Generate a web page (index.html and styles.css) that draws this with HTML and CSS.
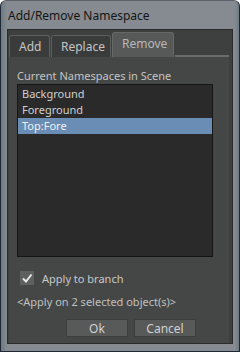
FILE: index.html
```html
<!DOCTYPE html>
<html lang="en">

<head>
    <meta charset="UTF-8">
    <title>Add/Remove Namespace</title>
    <link rel="stylesheet" href="styles.css">
</head>

<body>
    <div class="window">
        <div class="titlebar">Add/Remove Namespace</div>
        <div class="client">
            <div class="tabs">
                <div class="tab">Add</div>
                <div class="tab">Replace</div>
                <div class="tab active">Remove</div>
                <div class="tab-rest"></div>
            </div>
            <div class="panel">
                <div class="label">Current Namespaces in Scene</div>
                <div class="list">
                    <div class="item">Background</div>
                    <div class="item">Foreground</div>
                    <div class="item selected">Top:Fore</div>
                </div>
                <div class="check-row">
                    <span class="checkbox">
                        <svg width="14" height="14" viewBox="0 0 14 14">
                            <path d="M3 7.5 L6 10.5 L11.5 3.5" fill="none" stroke="#e8e8e8" stroke-width="2" />
                        </svg>
                    </span>
                    <span>Apply to branch</span>
                </div>
                <div class="info">&lt;Apply on 2 selected object(s)&gt;</div>
                <div class="buttons">
                    <button class="btn">Ok</button>
                    <button class="btn">Cancel</button>
                </div>
            </div>
        </div>
    </div>
</body>

</html>
```

FILE: styles.css
```css
body {
    margin: 0;
    background-color: #ffffff;
    font-family: "Noto Sans", "Open Sans", sans-serif;
    font-size: 11px;
}

.window {
    width: 240px;
    height: 352px;
    box-sizing: border-box;
    display: flex;
    flex-direction: column;
    background: linear-gradient(to right, #6f7a84, #858b90 6px, #858b90 234px, #6f7a84);
    border: 1px solid #1e2833;
    border-top-color: #5c6268;
    border-radius: 6px 6px 0 0;
    padding: 0 6px 7px 6px;
}

.titlebar {
    height: 28px;
    line-height: 30px;
    padding-left: 1px;
    font-size: 12px;
    color: #151515;
}

.client {
    flex: 1;
    display: flex;
    flex-direction: column;
    background-color: #3e403f;
    border: 1px solid #2a2c2c;
    padding: 2px 3px 0 1px;
}

.tabs {
    display: flex;
    align-items: flex-end;
    height: 25px;
}

.tab {
    height: 21px;
    line-height: 21px;
    padding: 0 9px;
    margin-right: 1px;
    background-color: #3a3c3c;
    border: 1px solid #5c5e5e;
    border-bottom: none;
    border-radius: 3px 3px 0 0;
    color: #c4c4c4;
    font-size: 12px;
}

.tab:first-child {
    width: 21px;
}

.tab:nth-child(2) {
    width: 40px;
}

.tab.active {
    height: 24px;
    line-height: 22px;
    width: 42px;
    background-color: #575959;
    border-color: #666868;
    color: #b8b8b8;
}

.tab-rest {
    flex: 1;
    height: 2px;
    background-color: #6a6c6c;
}

.panel {
    flex: 1;
    display: flex;
    flex-direction: column;
    background-color: #454746;
    padding: 11px 0 0 8px;
}

.label {
    color: #c4c4c4;
    height: 16px;
    line-height: 16px;
}

.list {
    width: 194px;
    height: 170px;
    background-color: #2a2a2a;
    border: 1px solid #151515;
    padding-top: 1px;
}

.item {
    height: 16px;
    line-height: 16px;
    padding-left: 4px;
    color: #d0d0d0;
}

.item.selected {
    background-color: #6a8db6;
    color: #f0f0f0;
}

.check-row {
    display: flex;
    align-items: center;
    gap: 8px;
    margin-top: 13px;
    padding-left: 3px;
    color: #c8c8c8;
    height: 16px;
}

.checkbox {
    width: 14px;
    height: 14px;
    background-color: #5e6060;
    display: flex;
}

.info {
    margin-top: 8px;
    color: #c0c0c0;
    height: 16px;
    line-height: 16px;
}

.buttons {
    display: flex;
    gap: 6px;
    margin-top: 9px;
    padding-left: 49px;
}

.btn {
    width: 62px;
    height: 18px;
    padding: 0;
    border: 1px solid #3c3e3e;
    background-color: #585a5a;
    color: #d0d0d0;
    font-family: "Noto Sans", "Open Sans", sans-serif;
    font-size: 12px;
}
```
